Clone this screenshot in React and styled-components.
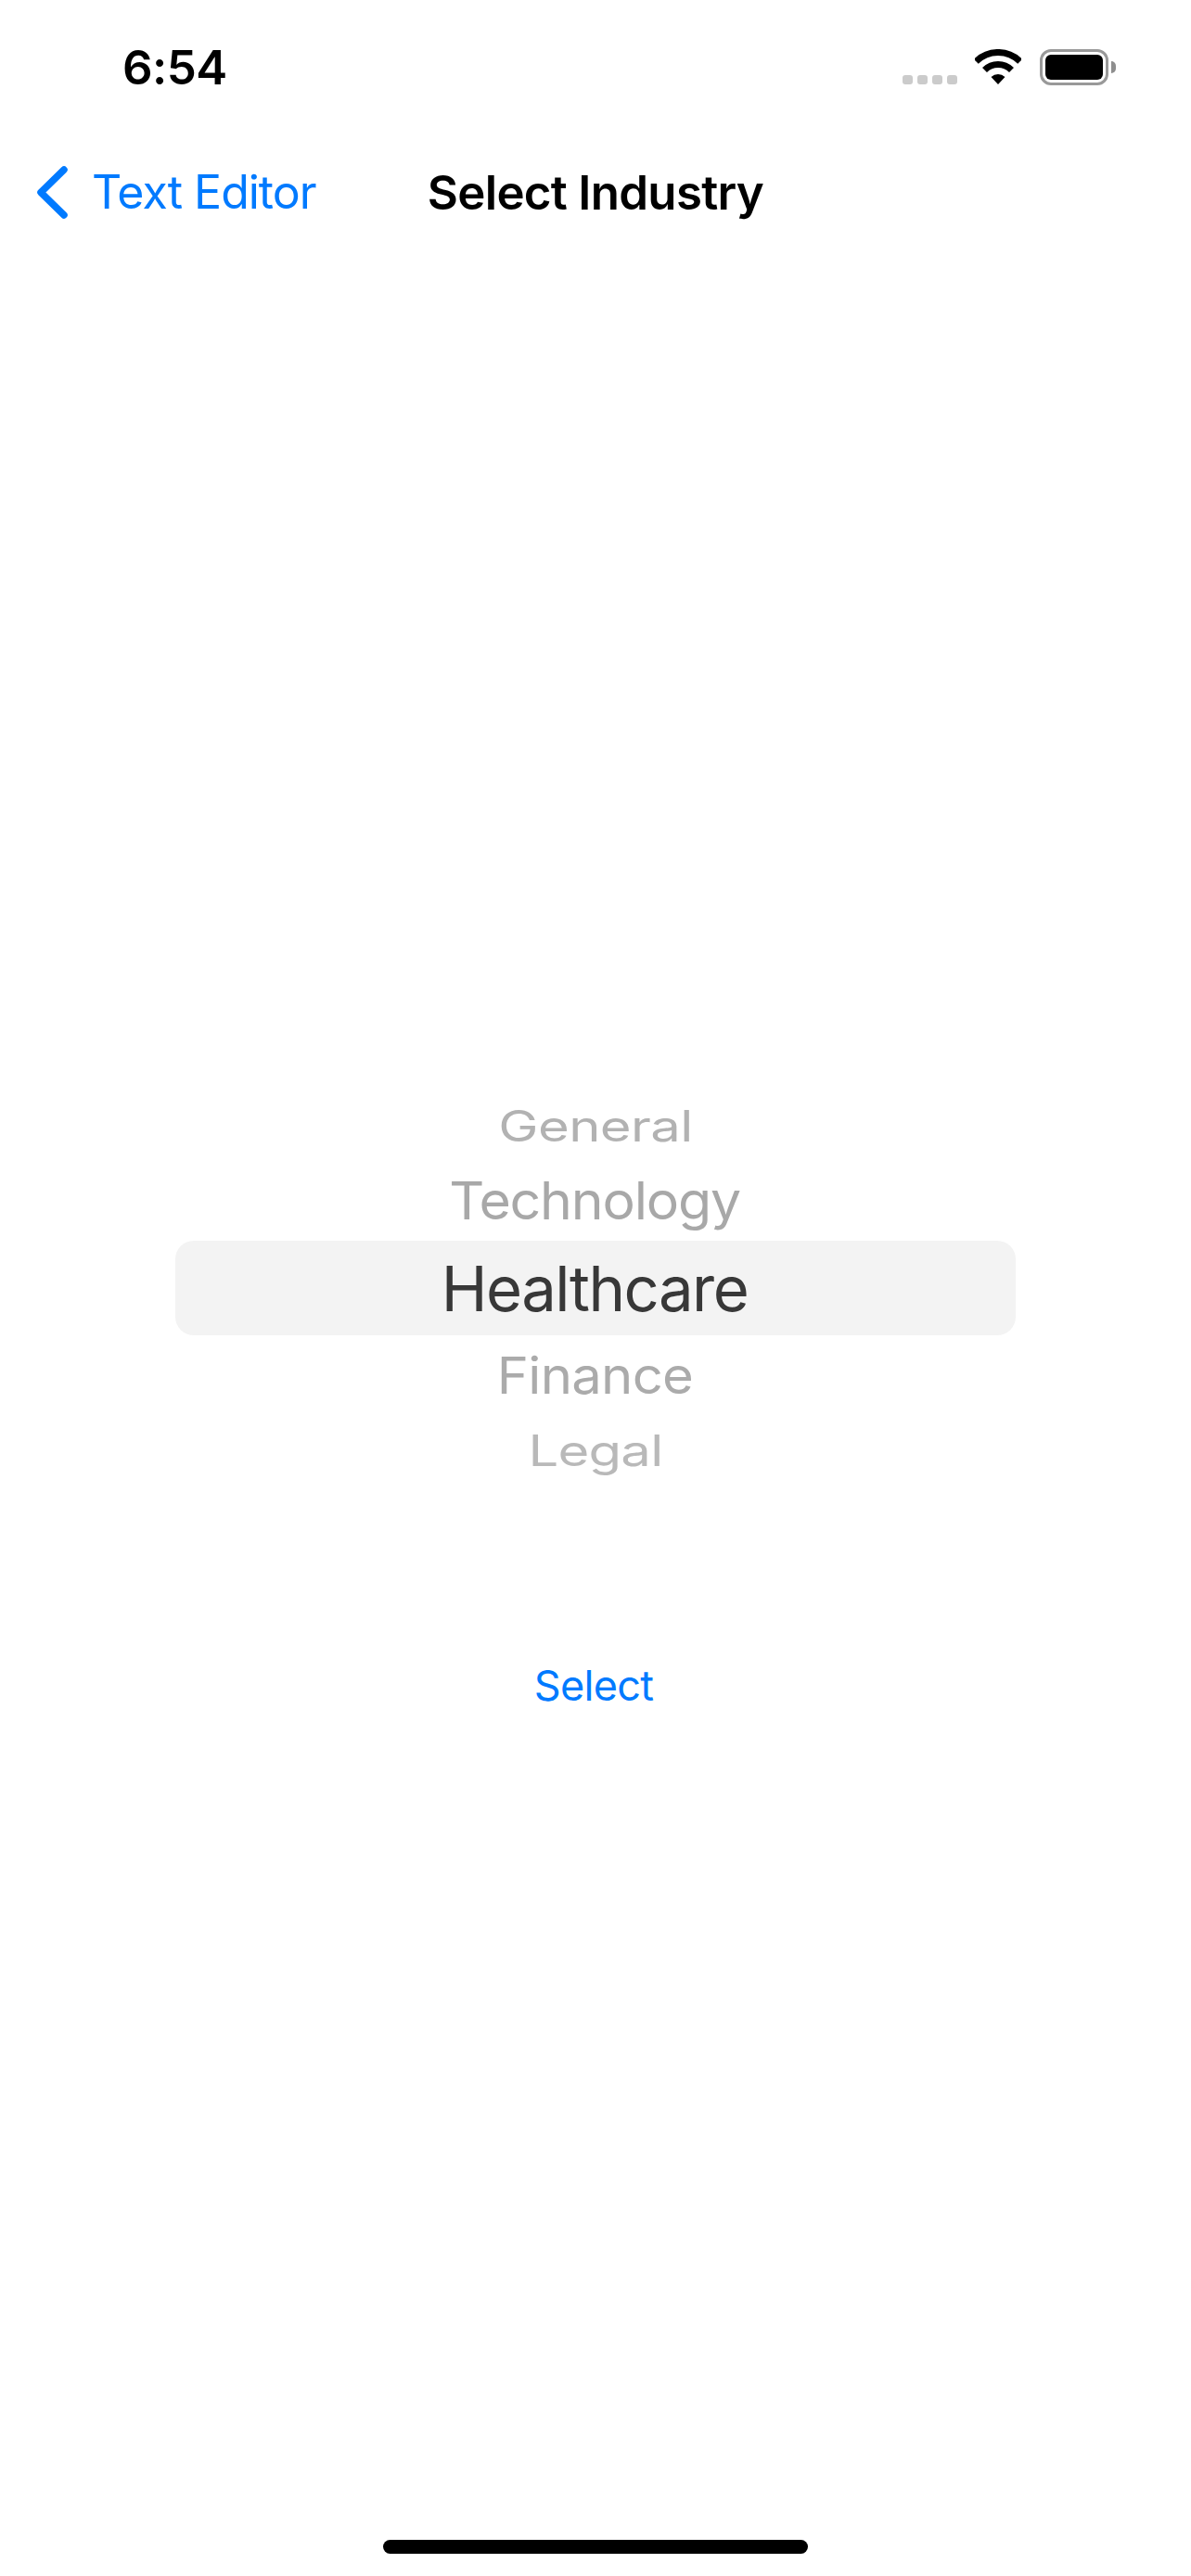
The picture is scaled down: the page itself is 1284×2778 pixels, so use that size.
import React from "react";
import styled, { createGlobalStyle } from "styled-components";

const Global = createGlobalStyle`
  html, body { margin: 0; padding: 0; background: #fff; }
  #root { width: 1284px; height: 2778px; }
`;

const Page = styled.div`
  width: 1284px;
  height: 2778px;
  display: flex;
  flex-direction: column;
  background: #fff;
  font-family: Inter, "Liberation Sans", sans-serif;
  overflow: hidden;
`;

const StatusBar = styled.div`
  height: 146px;
  box-sizing: border-box;
  padding: 53px 89px 0 132px;
  display: flex;
  align-items: flex-start;
  justify-content: space-between;
`;

const Time = styled.span`
  font-size: 51px;
  font-weight: 600;
  line-height: 39px;
  letter-spacing: -0.6px;
  color: #000;
`;

const StatusIcons = styled.div`
  display: flex;
  align-items: flex-start;
`;

const Dots = styled.div`
  display: flex;
  gap: 5px;
  margin: 28px 19px 0 0;
`;

const Dot = styled.i`
  display: block;
  width: 11px;
  height: 10px;
  border-radius: 3px;
  background: #cbcbcb;
`;

const Battery = styled.div`
  position: relative;
  width: 74px;
  height: 39px;
  box-sizing: border-box;
  margin-left: 20px;
  padding: 3px;
  border: 3px solid #999;
  border-radius: 12px;
  &::after {
    content: "";
    position: absolute;
    left: 74px;
    top: 10px;
    width: 5px;
    height: 13px;
    border-radius: 0 6px 6px 0;
    background: #8e8e8e;
  }
`;

const BatteryFill = styled.div`
  height: 100%;
  border-radius: 6px;
  background: #000;
`;

const NavBar = styled.div`
  display: grid;
  grid-template-columns: 1fr auto 1fr;
  align-items: center;
  height: 122px;
  box-sizing: border-box;
  padding: 0 40px;
`;

const Back = styled.div`
  display: flex;
  align-items: center;
  gap: 26px;
  color: #007aff;
  font-size: 50px;
  letter-spacing: -1px;
`;

const Title = styled.div`
  font-size: 51px;
  font-weight: 600;
  letter-spacing: -0.7px;
  color: #000;
`;

const Main = styled.div`
  display: flex;
  flex-direction: column;
  align-items: center;
  padding-top: 908px;
`;

const Picker = styled.div`
  width: 906px;
  display: flex;
  flex-direction: column;
  align-items: center;
`;

const Row = styled.div`
  width: 100%;
  height: ${(p) => p.$h}px;
  display: flex;
  align-items: center;
  justify-content: center;
  color: ${(p) => p.$color};
  font-size: ${(p) => p.$size}px;
  letter-spacing: ${(p) => p.$ls}px;
  line-height: 1;
`;

const Selected = styled(Row)`
  background: #f3f3f3;
  border-radius: 20px;
`;

const RowText = styled.span`
  display: block;
  margin-right: ${(p) => p.$nudge}px;
  transform: scaleY(${(p) => p.$sy});
`;

const SelectButton = styled.div`
  margin: 190px 4px 0 0;
  color: #007aff;
  font-size: 45px;
  letter-spacing: -0.7px;
  line-height: 54px;
`;

const HomeBar = styled.div`
  width: 458px;
  height: 15px;
  margin: auto auto 24px;
  border-radius: 8px;
  background: #000;
`;

const Wifi = () => (
  <svg width="50" height="38" viewBox="0 0 50 38">
    <g fill="none" stroke="#000" strokeWidth="7">
      <path d="M1.3 13.3A33.5 33.5 0 0 1 48.7 13.3" />
      <path d="M10.5 22.5A20.5 20.5 0 0 1 39.5 22.5" />
    </g>
    <path d="M25 38L17.5 30A11 11 0 0 1 32.5 30Z" fill="#000" />
  </svg>
);

const Chevron = () => (
  <svg width="33" height="57" viewBox="0 0 33 57">
    <path d="M29 4L4 28.500L29 53" fill="none" stroke="#007aff" strokeWidth="7.500" strokeLinecap="round" strokeLinejoin="round" />
  </svg>
);

const rows = [
  { text: "General", h: 75, size: 58, ls: -0.6, sy: 0.8, nudge: 0, color: "#b2b2b2" },
  { text: "Technology", h: 87, size: 59, ls: -1.2, sy: 0.95, nudge: 2, color: "#a8a8a8" },
];
const rowsAfter = [
  { text: "Finance", h: 86, size: 58, ls: -0.7, sy: 0.95, nudge: 1, color: "#ababab" },
  { text: "Legal", h: 75, size: 58, ls: -0.8, sy: 0.8, nudge: 0, color: "#b9b9b9" },
];

const renderRow = (r) => (
  <Row key={r.text} $h={r.h} $size={r.size} $ls={r.ls} $color={r.color}>
    <RowText $sy={r.sy} $nudge={r.nudge}>{r.text}</RowText>
  </Row>
);

export default function App() {
  return (
    <Page>
      <Global />
      <StatusBar>
        <Time>6:54</Time>
        <StatusIcons>
          <Dots>
            <Dot />
            <Dot />
            <Dot />
            <Dot />
          </Dots>
          <Wifi />
          <Battery>
            <BatteryFill />
          </Battery>
        </StatusIcons>
      </StatusBar>
      <NavBar>
        <Back>
          <Chevron />
          <span>Text Editor</span>
        </Back>
        <Title>Select Industry</Title>
        <span />
      </NavBar>
      <Main>
        <Picker>
          {rows.map(renderRow)}
          <Selected $h={102} $size={67} $ls={-1.5} $color="#383838">
            <RowText $sy={1} $nudge={2}>Healthcare</RowText>
          </Selected>
          {rowsAfter.map(renderRow)}
        </Picker>
        <SelectButton>Select</SelectButton>
      </Main>
      <HomeBar />
    </Page>
  );
}
